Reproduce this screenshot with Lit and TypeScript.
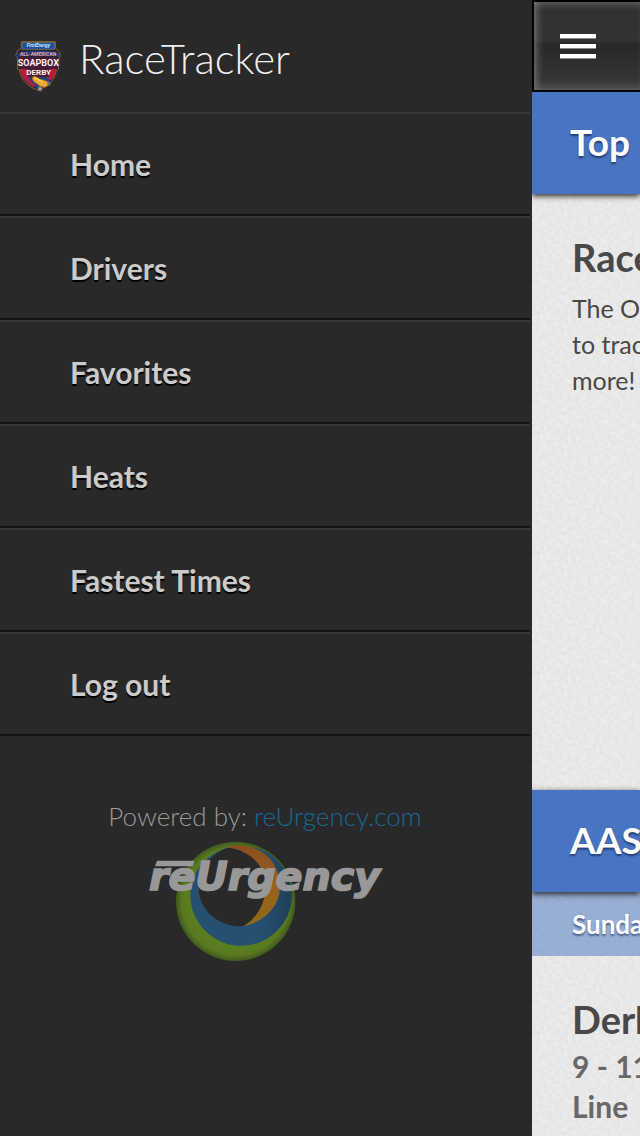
import { LitElement, html, css, svg } from "lit";
import { customElement } from "lit/decorators.js";

const MENU = ["Home", "Drivers", "Favorites", "Heats", "Fastest Times", "Log out"];

@customElement("derby-badge")
class DerbyBadge extends LitElement {
  static styles = css`
    :host { display: block; flex: none; width: 46px; height: 54px; }
    svg { display: block; width: 46px; height: 54px; }
    text { font-family: "Roboto", sans-serif; font-weight: 700; text-anchor: middle; }
  `;
  render() {
    return html`${svg`
      <svg viewBox="0 0 138 162" role="img" aria-label="Soap Box Derby">
        <path d="M19 8H121V27L133 38 137 50 132 58 130 92 124 95C121 112 112 131 92 143L71 154C42 146 17 122 13 93L7 90 8 57 2 50 6 37 19 26Z" fill="#25253a" stroke="#80642e" stroke-width="3"/>
        <path d="M13 58H126C127 92 120 125 70 150 23 129 13 95 13 58Z" fill="#233f86"/>
        <path d="M14 88H36L40 114C44 123 53 132 61 138L57 145C32 131 16 113 14 88ZM126 88H101L95 117 108 124C119 113 125 102 126 88Z" fill="#b21f3b"/>
        <path d="M21 10H119V31H21Z" fill="#1853a6" stroke="#a68036" stroke-width="2"/>
        <text x="70" y="25" font-size="14" font-style="italic" fill="#d8e8f8">FirstEnergy</text>
        <path d="M7 42Q70 27 132 42L134 54Q70 40 4 54Z" fill="#283a75"/>
        <text x="69" y="50" font-size="15" fill="#e4a8ac">ALL-AMERICAN</text>
        <path d="M12 54H127L128 90H102V114H40V90H12Z" fill="#481c37"/>
        <text x="70" y="81" font-size="27" fill="#fff4ee">SOAPBOX</text>
        <text x="71" y="108" font-size="24" fill="#fff1ed">DERBY</text>
        <path d="M54 113Q61 108 73 119L96 127Q106 134 98 141 89 148 75 141L58 129Q48 120 54 113Z" fill="#efa62f" stroke="#a3601d" stroke-width="2"/>
        <path d="M58 119Q65 116 72 124L84 129" fill="none" stroke="#ffd06a" stroke-width="4"/>
        <ellipse cx="75" cy="149" rx="7" ry="8" fill="#777"/>
        <ellipse cx="102" cy="134" rx="5" ry="7" fill="#6d6965"/>
        <circle cx="75" cy="149" r="3" fill="#bbb"/>
      </svg>`}`;
  }
}

@customElement("reurgency-logo")
class ReurgencyLogo extends LitElement {
  static styles = css`
    :host { display: block; width: 240px; height: 119px; }
    svg { display: block; width: 240px; height: 119px; overflow: visible; }
    text {
      font-family: "DejaVu Sans", sans-serif;
      font-weight: 700;
      font-style: italic;
      fill: #989898;
      stroke: #989898;
      stroke-width: 5px;
    }
  `;
  render() {
    return html`${svg`
      <svg viewBox="166 155 720 357" role="img" aria-label="reUrgency">
        <defs>
          <radialGradient id="green"><stop offset="0.75" stop-color="#5d7e1d"/><stop offset="0.9" stop-color="#587a20"/><stop offset="1" stop-color="#40591e"/></radialGradient>
          <linearGradient id="blue" x1="0" y1="0" x2="1" y2="0"><stop offset="0.7" stop-color="#255071"/><stop offset="1" stop-color="#203f58"/></linearGradient>
          <linearGradient id="orange" x1="0" y1="0" x2="0" y2="1"><stop offset="0" stop-color="#8c4d20"/><stop offset="0.5" stop-color="#98611d"/><stop offset="1" stop-color="#8c6b18"/></linearGradient>
        </defs>
        <circle cx="438" cy="333" r="179" fill="url(#green)"/>
        <path d="M415 172C350 190 302 245 302 313A152 153 0 0 0 607 313C604 252 566 198 510 175Z" fill="url(#blue)"/>
        <path d="M415 172C432 163 467 163 500 177 548 197 570 241 571 291 570 351 520 397 460 408L400 290Z" fill="url(#orange)"/>
        <path d="M415 172C359 190 327 241 327 295 328 358 385 410 460 408 506 381 529 334 528 280 525 225 477 178 415 172Z" fill="#292929"/>
        <path d="M202 211H314L309 228H196Z" fill="#989898"/>
        <text x="178" y="299" font-size="119">reUrgency</text>
      </svg>`}`;
  }
}

@customElement("app-root")
class AppRoot extends LitElement {
  static styles = css`
    :host {
      display: flex;
      height: 100vh;
      overflow: hidden;
      background: #292929;
      font-family: "Lato", sans-serif;
    }
    * { box-sizing: border-box; }
    h1, h2, h3, p, ul { margin: 0; padding: 0; }
    .menu { flex: 1; min-width: 0; padding-right: 2px; }
    .brand { display: flex; align-items: center; gap: 18px; height: 112px; padding: 20px 16px 0 15px; }
    .brand h1 { color: #f0f0f0; font-size: 42px; font-weight: 300; line-height: 48px; padding-bottom: 16px; }
    .items { list-style: none; }
    .items a {
      display: block;
      padding-left: 70px;
      border-top: 2px solid #383838;
      border-bottom: 2px solid #131313;
      color: #cbcbcb;
      font-size: 30px;
      font-weight: 700;
      line-height: 100px;
      text-decoration: none;
      text-shadow: 0 2px 0 #000;
    }
    .powered { display: flex; flex-direction: column; align-items: center; gap: 10px; padding-top: 64px; }
    .powered p { color: #999; font-size: 26px; font-weight: 300; line-height: 32px; }
    .powered a { color: #176a94; text-decoration: none; }
    .page {
      flex: none;
      width: 108px;
      overflow: hidden;
      white-space: nowrap;
      color: #484848;
      background-color: #ededed;
      background-image: url("data:image/svg+xml,%3Csvg xmlns='http://www.w3.org/2000/svg' width='120' height='120'%3E%3Cfilter id='n'%3E%3CfeTurbulence type='fractalNoise' baseFrequency='.25' numOctaves='2' stitchTiles='stitch'/%3E%3CfeColorMatrix values='0 0 0 0 0 0 0 0 0 0 0 0 0 0 0 .08 0 0 0 -.02'/%3E%3C/filter%3E%3Crect width='120' height='120' filter='url(%23n)'/%3E%3C/svg%3E");
    }
    .bar {
      display: flex;
      align-items: center;
      height: 92px;
      padding-left: 26px;
      border: 2px solid #000;
      border-right: 0;
      background: linear-gradient(#303030 0, #333 40px, #272727 41px, #393939 100%);
      box-shadow: inset 8px 0 8px -6px #777, inset 0 8px 8px -6px #666, inset 0 -8px 8px -6px #666;
    }
    .toggle { display: flex; flex-direction: column; gap: 6px; width: 36px; padding: 0; border: 0; background: none; }
    .line { height: 4px; width: 36px; background: #fff; box-shadow: 0 1px 0 #888; }
    .band {
      position: relative;
      height: 102px;
      padding-left: 38px;
      background: #4874c2;
      box-shadow: 0 2px 6px #222;
      color: #fff;
      font-size: 37px;
      font-weight: 700;
      line-height: 100px;
      text-shadow: 0 2px 2px #223e70;
    }
    .day {
      height: 64px;
      padding-left: 40px;
      background: rgba(72, 116, 194, 0.5);
      color: #fff;
      font-size: 26px;
      font-weight: 700;
      line-height: 64px;
      text-shadow: 0 2px 2px #496087;
    }
    .block { padding: 38px 0 0 40px; }
    .intro { min-height: 596px; }
    .block h3 { font-size: 38px; font-weight: 700; line-height: 50px; }
    .text { padding-top: 8px; font-size: 25px; line-height: 36px; }
    .time { color: #686868; font-size: 30px; font-weight: 700; line-height: 40px; padding-top: 2px; }
  `;
  render() {
    return html`
      <nav class="menu" aria-label="Main">
        <header class="brand"><derby-badge></derby-badge><h1>RaceTracker</h1></header>
        <ul class="items">${MENU.map((item) => html`<li><a href="#">${item}</a></li>`)}</ul>
        <footer class="powered">
          <p>Powered by: <a href="#">reUrgency.com</a></p>
          <reurgency-logo></reurgency-logo>
        </footer>
      </nav>
      <main class="page">
        <div class="bar">
          <button class="toggle" aria-label="Menu"><span class="line"></span><span class="line"></span><span class="line"></span></button>
        </div>
        <h2 class="band">Top</h2>
        <section class="block intro">
          <h3>Race</h3>
          <p class="text">The Of<br />to trac<br />more!</p>
        </section>
        <h2 class="band">AAS</h2>
        <p class="day">Sunda</p>
        <section class="block">
          <h3>Derb</h3>
          <p class="time">9 - 11<br />Line</p>
        </section>
      </main>
    `;
  }
}
